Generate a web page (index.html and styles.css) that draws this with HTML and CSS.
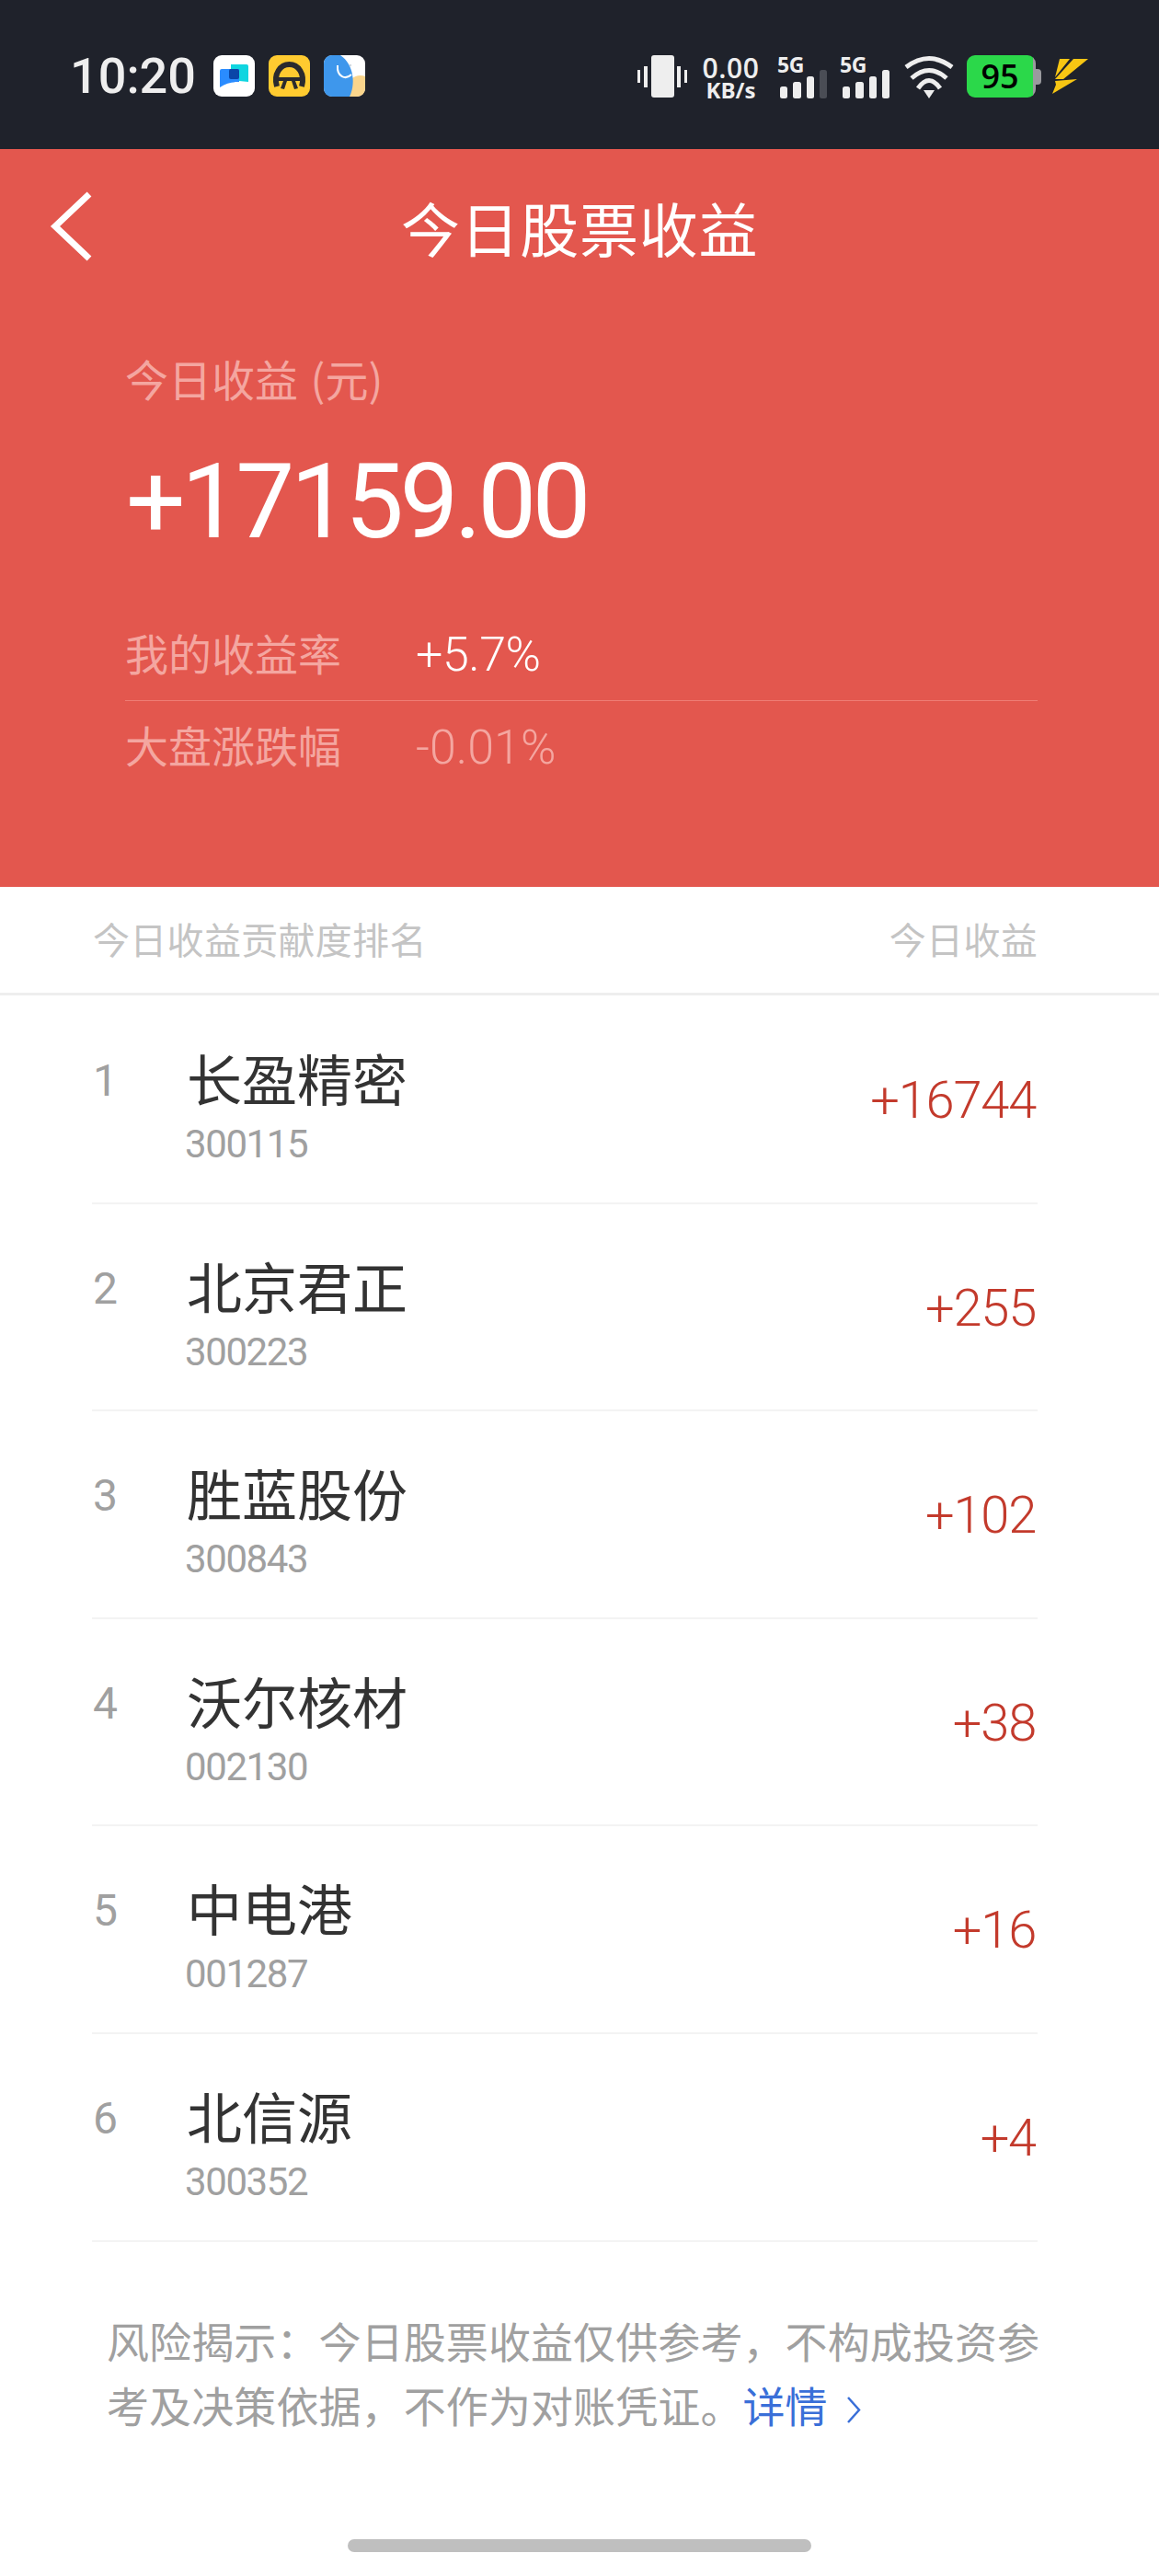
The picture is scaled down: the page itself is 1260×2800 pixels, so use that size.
FILE: index.html
```html
<!DOCTYPE html>
<html lang="zh-CN">
<head>
<meta charset="utf-8">
<title>今日股票收益</title>
<link rel="stylesheet" href="styles.css">
</head>
<body>
<div class="page">
  <header class="status">
    <div class="status-left">
      <span class="time">10:20</span>
      <svg class="app first" viewBox="0 0 45 45"><rect width="45" height="45" rx="9" fill="#fff"/><path d="M19 10h17a2 2 0 0 1 2 2v17l-10-1-9-2z" fill="#10d5e0"/><path d="M9 15h19v14c-7 0-14 1-21 6V17a2 2 0 0 1 2-2z" fill="#2a8cff"/><rect x="17" y="15" width="11" height="11" rx="2" fill="#0a46a8"/></svg>
      <svg class="app" viewBox="0 0 45 45"><rect width="45" height="45" rx="9" fill="#ffcb30"/><path d="M9 34C5 20 13 10 22.500 10S40 20 36 34" fill="none" stroke="#2a2a2e" stroke-width="6"/><path d="M9 24h27v4H29l3 8-4 1-3-9h-5l-3 9-4-1 3-8H9z" fill="#2a2a2e"/></svg>
      <svg class="app" viewBox="0 0 45 45"><rect width="45" height="45" rx="9" fill="#fff"/><path d="M28 45h8c5 0 9-4 9-9V23c-5-2-11-1-15 3z" fill="#fad58c"/><path d="M9 0C4 0 0 4 0 9v27c0 5 4 9 9 9h19c6-12 6-34-10-45z" fill="#3e97ec"/><path d="M15 11c-1 13 9 16 15 10" fill="none" stroke="#fff" stroke-width="2"/><circle cx="29" cy="11" r="1.200" fill="#cfd8e0"/></svg>
    </div>
    <div class="status-right">
      <svg class="vib" viewBox="0 0 55 46"><rect x="15" width="25" height="46" rx="3" fill="#eee"/><path d="M7 12h4v23H7zM0 16h3v14H0zM43 12h4v23h-4zM51 16h3v14h-3z" fill="#eee"/></svg>
      <div class="speed"><span class="speed-num">0.00</span><span class="speed-unit">KB/s</span></div>
      <div class="sig one"><span class="sig-text">5G</span><svg class="bars" viewBox="0 0 54 47"><rect x="3" y="34" width="8" height="13" rx="2.500" fill="#eee"/><rect x="17" y="29" width="9" height="18" rx="2.500" fill="#eee"/><rect x="32" y="23" width="8" height="24" rx="2.500" fill="#eee"/><rect x="46" y="16" width="8" height="31" rx="2.500" fill="#4a4d55"/></svg></div>
      <div class="sig two"><span class="sig-text">5G</span><svg class="bars" viewBox="0 0 54 47"><rect x="3" y="34" width="8" height="13" rx="2.500" fill="#eee"/><rect x="17" y="29" width="9" height="18" rx="2.500" fill="#eee"/><rect x="32" y="23" width="8" height="24" rx="2.500" fill="#eee"/><rect x="46" y="16" width="8" height="31" rx="2.500" fill="#eee"/></svg></div>
      <svg class="wifi" viewBox="0 0 56 47"><path d="M3 13Q28-6 53 13M9 25Q28 8 47 25M16 36Q28 19 40 36" fill="none" stroke="#eee" stroke-width="5"/><path d="M22 38h12l-6 9z" fill="#eee"/></svg>
      <div class="battery"><div class="battery-body"><span class="battery-level">95</span></div><div class="battery-nub"></div></div>
      <svg class="bolt" viewBox="0 0 39 38"><path d="M8 0h11L3 20zM23 0h16L12 22H3zM3 24l24-2L0 38l4-10z" fill="#f7c613"/></svg>
    </div>
  </header>

  <section class="hero">
    <nav class="nav">
      <svg class="back" viewBox="0 0 46 76"><path d="M43 3 6 38l37 35" fill="none" stroke="#fff" stroke-width="7"/></svg>
      <h1 class="title">今日股票收益</h1>
    </nav>
    <div class="summary">
      <div class="label">今日收益 (元)</div>
      <div class="total">+17159.00</div>
      <div class="stats">
        <div class="stat stat-line"><span class="stat-name">我的收益率</span><span class="stat-value">+5.7%</span></div>
        <div class="stat"><span class="stat-name">大盘涨跌幅</span><span class="stat-value muted">-0.01%</span></div>
      </div>
    </div>
  </section>

  <div class="table-head"><span>今日收益贡献度排名</span><span>今日收益</span></div>

  <ul class="list">
    <li class="row"><span class="rank">1</span><div class="info"><div class="name">长盈精密</div><div class="code">300115</div></div><span class="amount">+16744</span></li>
    <li class="row"><span class="rank">2</span><div class="info"><div class="name">北京君正</div><div class="code">300223</div></div><span class="amount">+255</span></li>
    <li class="row"><span class="rank">3</span><div class="info"><div class="name">胜蓝股份</div><div class="code">300843</div></div><span class="amount">+102</span></li>
    <li class="row"><span class="rank">4</span><div class="info"><div class="name">沃尔核材</div><div class="code">002130</div></div><span class="amount">+38</span></li>
    <li class="row"><span class="rank">5</span><div class="info"><div class="name">中电港</div><div class="code">001287</div></div><span class="amount">+16</span></li>
    <li class="row"><span class="rank">6</span><div class="info"><div class="name">北信源</div><div class="code">300352</div></div><span class="amount">+4</span></li>
  </ul>

  <p class="note">风险揭示：今日股票收益仅供参考，不构成投资参考及决策依据，不作为对账凭证。<a class="link">详情<svg class="chev" viewBox="0 0 16 29"><path d="M2 1l12 13.500L2 28" fill="none" stroke="#3a6fd8" stroke-width="2.500"/></svg></a></p>

  <div class="home-bar"></div>
</div>
</body>
</html>
```
FILE: styles.css
```css
* { box-sizing: border-box; }
html, body { margin: 0; padding: 0; background: #fff; }
body { font-family: "Noto Sans CJK SC", "Noto Sans", sans-serif; }
.page { width: 1260px; height: 2800px; background: #fff; overflow: hidden; }

.status { height: 162px; background: #1f222b; display: flex; justify-content: space-between; align-items: flex-start; padding: 60px 77px 0 76px; }
.status-left { display: flex; align-items: center; height: 45px; }
.time { font-family: Roboto, sans-serif; font-weight: 500; font-size: 54px; line-height: 45px; color: #eee; width: 135px; }
.app { width: 45px; height: 45px; margin-left: 15px; display: block; }
.app.first { margin-left: 21px; }
.status-right { display: flex; align-items: flex-start; }
.vib { width: 55px; height: 46px; display: block; }
.speed { width: 59px; margin-left: 17px; display: flex; flex-direction: column; align-items: center; font-family: "Open Sans", sans-serif; font-weight: 600; color: #eee; }
.speed-num { font-size: 30px; line-height: 27px; letter-spacing: 0.6px; }
.speed-unit { font-size: 24px; font-weight: 700; line-height: 22px; }
.sig { width: 54px; height: 47px; position: relative; }
.sig.one { margin-left: 21px; }
.sig.two { margin-left: 14px; }
.bars { width: 54px; height: 47px; display: block; }
.sig-text { position: absolute; left: 0; top: 0; font-family: "Open Sans", sans-serif; font-weight: 700; font-size: 23px; line-height: 20px; letter-spacing: -0.5px; color: #eee; }
.wifi { width: 56px; height: 47px; margin-left: 15px; display: block; }
.battery { width: 81px; height: 46px; margin-left: 13px; display: flex; align-items: center; }
.battery-body { width: 75px; height: 46px; border-radius: 9px; background: linear-gradient(to right, #2bd84a 72px, #9a9a9e 72px); display: flex; align-items: center; justify-content: center; padding-right: 3px; }
.battery-level { font-family: "Open Sans", sans-serif; font-weight: 600; font-size: 36px; line-height: 46px; color: #000; }
.battery-nub { width: 6px; height: 17px; border-radius: 0 4px 4px 0; background: #9a9a9e; }
.bolt { width: 39px; height: 38px; margin-left: 12px; margin-top: 4px; display: block; }

.hero { background: #e3574e; height: 802px; color: #fff; }
.nav { height: 176px; padding-bottom: 9px; position: relative; display: flex; align-items: center; justify-content: center; }
.back { position: absolute; left: 54px; top: 46px; width: 46px; height: 76px; }
.title { margin: 0; font-size: 64px; font-weight: 400; line-height: 90px; letter-spacing: 0.7px; color: #fff; }
.summary { padding: 38px 132px 0 136px; }
.label { font-size: 47px; font-weight: 400; line-height: 70px; color: #f4a6a0; word-spacing: 3px; }
.total { margin-top: 19px; margin-left: 1px; font-family: Roboto, sans-serif; font-weight: 400; font-size: 114px; line-height: 160px; letter-spacing: -4.7px; color: #fff; }
.stats { margin-top: 37px; }
.stat { height: 100px; display: flex; align-items: center; }
.stat-line { border-bottom: 1px solid #ee7d75; }
.stat-name { width: 316px; font-size: 47px; font-weight: 400; line-height: 60px; margin-bottom: 6px; color: #f4a6a0; }
.stat-value { font-family: Roboto, sans-serif; font-weight: 300; font-size: 52px; letter-spacing: -0.5px; color: #fff; }
.stat-value.muted { letter-spacing: 0; color: #f4a6a0; }

.table-head { height: 118px; padding: 0 132px 4px 101px; border-bottom: 3px solid #eee; display: flex; justify-content: space-between; align-items: center; font-size: 40px; font-weight: 400; letter-spacing: 0.3px; color: #c4c4c4; }

.list { list-style: none; margin: 1px 132px 0 100px; padding: 0; }
.row { height: 225.6px; border-bottom: 2px solid #f3f3f3; display: flex; align-items: flex-start; padding-top: 49px; }
.rank { width: 103px; margin-top: 16px; padding-left: 1px; font-family: Roboto, sans-serif; font-weight: 400; font-size: 48px; line-height: 54px; color: #a0a0a0; }
.info { flex: 1; }
.name { font-size: 60px; font-weight: 400; line-height: 78px; color: #333; }
.code { margin-top: 9px; margin-left: -2px; font-family: Roboto, sans-serif; font-weight: 400; font-size: 42px; line-height: 50px; letter-spacing: -1.4px; color: #a0a0a0; }
.amount { margin-top: 27px; margin-right: 2px; font-family: Roboto, sans-serif; font-weight: 300; font-size: 56px; line-height: 74px; letter-spacing: -1.2px; color: #c33a2c; }

.note { margin: 71px 126px 0 116px; font-size: 46px; font-weight: 400; line-height: 70px; letter-spacing: 0.1px; color: #a0a0a0; }
.link { color: #3a6fd8; }
.chev { width: 16px; height: 29px; margin-left: 20px; vertical-align: -1px; }
.home-bar { width: 504px; height: 14px; margin: 112px auto 0; border-radius: 7px; background: #bfbfbf; }
```
